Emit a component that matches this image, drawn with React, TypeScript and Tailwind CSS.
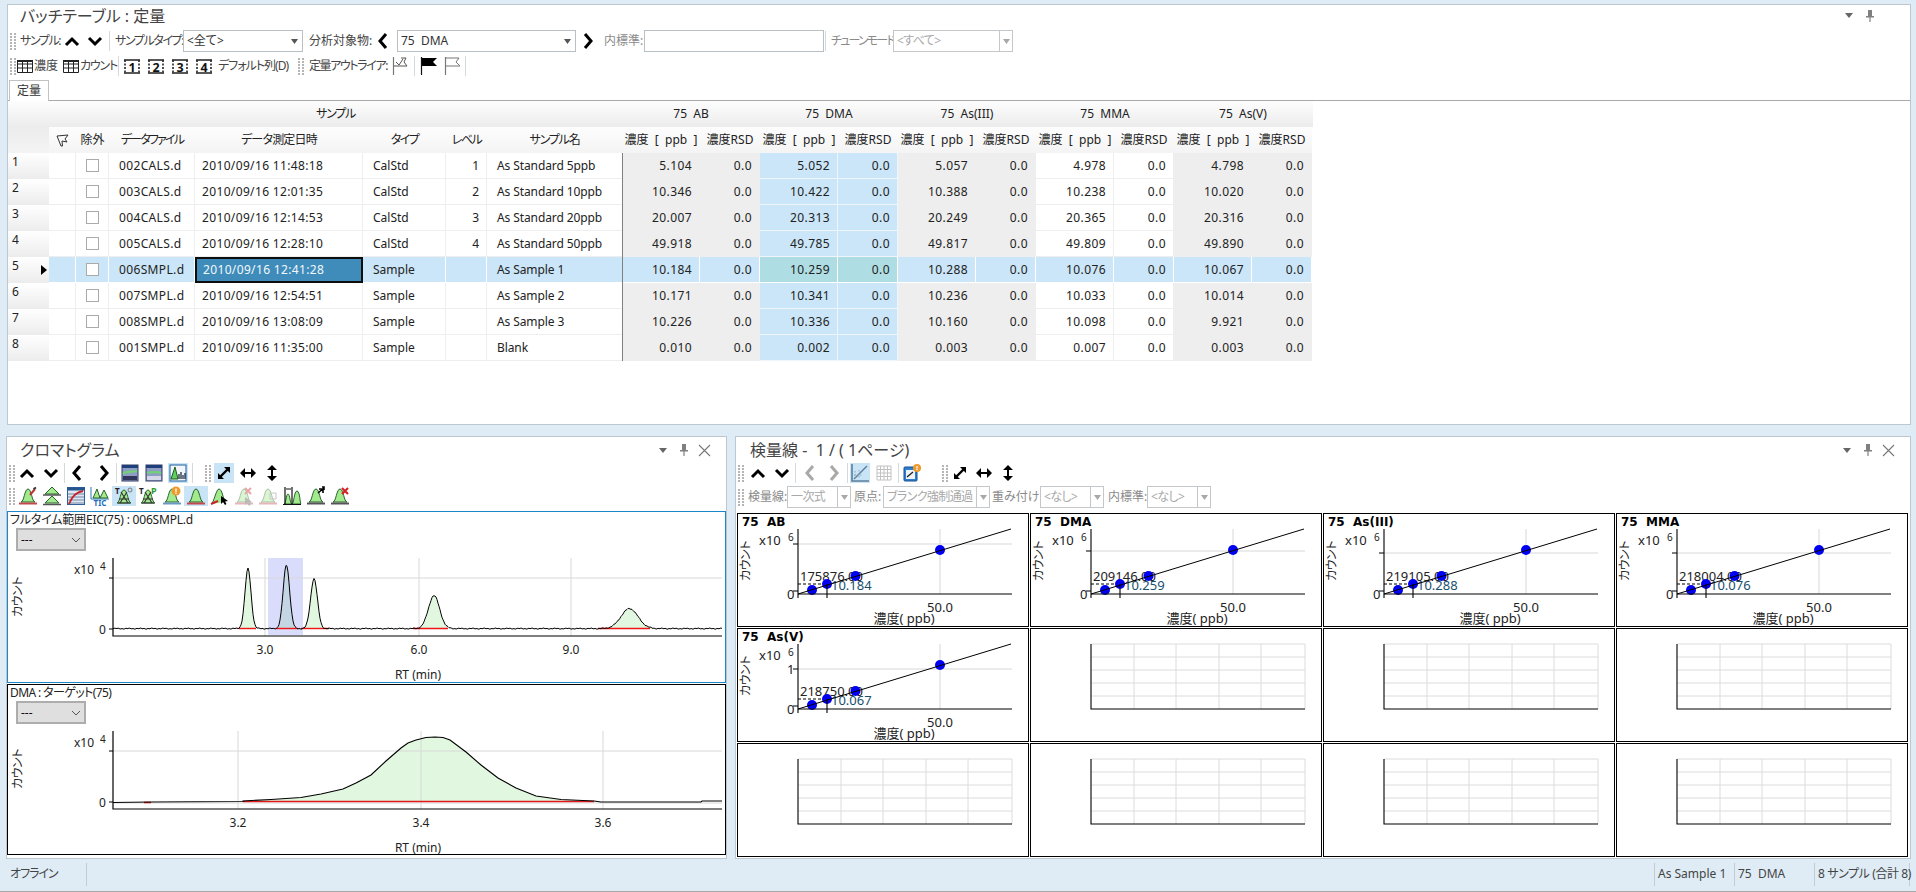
import type { ReactNode } from 'react'

const FONT = '"Noto Sans","Noto Sans CJK JP",sans-serif'

const rows = [
  ['002CALS.d', '2010/09/16 11:48:18', 'CalStd', '1', 'As Standard 5ppb', '5.104', '5.052', '5.057', '4.978', '4.798'],
  ['003CALS.d', '2010/09/16 12:01:35', 'CalStd', '2', 'As Standard 10ppb', '10.346', '10.422', '10.388', '10.238', '10.020'],
  ['004CALS.d', '2010/09/16 12:14:53', 'CalStd', '3', 'As Standard 20ppb', '20.007', '20.313', '20.249', '20.365', '20.316'],
  ['005CALS.d', '2010/09/16 12:28:10', 'CalStd', '4', 'As Standard 50ppb', '49.918', '49.785', '49.817', '49.809', '49.890'],
  ['006SMPL.d', '2010/09/16 12:41:28', 'Sample', '', 'As Sample 1', '10.184', '10.259', '10.288', '10.076', '10.067'],
  ['007SMPL.d', '2010/09/16 12:54:51', 'Sample', '', 'As Sample 2', '10.171', '10.341', '10.236', '10.033', '10.014'],
  ['008SMPL.d', '2010/09/16 13:08:09', 'Sample', '', 'As Sample 3', '10.226', '10.336', '10.160', '10.098', '9.921'],
  ['001SMPL.d', '2010/09/16 11:35:00', 'Sample', '', 'Blank', '0.010', '0.002', '0.003', '0.007', '0.003'],
]

const analytes = ['75  AB', '75  DMA', '75  As(III)', '75  MMA', '75  As(V)']

const calCells = [
  { name: '75  AB', gridY: 31, area: '175876.00', conc: '10.184' },
  { name: '75  DMA', gridY: 38, area: '209146.00', conc: '10.259' },
  { name: '75  As(III)', gridY: 40, area: '219105.00', conc: '10.288' },
  { name: '75  MMA', gridY: 40, area: '218004.00', conc: '10.076' },
  { name: '75  As(V)', gridY: 41, area: '218750.00', conc: '10.067', one: true },
]

const peaks = [
  { c: 247, h: 60, s: 3 },
  { c: 285.4, h: 64, s: 3.2 },
  { c: 313, h: 50, s: 3.4 },
  { c: 433, h: 33, s: 5.6 },
  { c: 628.5, h: 20, s: 8.5 },
]
const fills = [[238, 255], [275, 297], [300, 328], [412, 447], [597, 649]]

function eicY(x: number, noisy = true) {
  let y = 628.6
  for (const p of peaks) y -= p.h * Math.exp(-((x - p.c) ** 2) / (2 * p.s * p.s))
  if (noisy) y += Math.sin(x * 1.7) * 0.35 + Math.sin(x * 0.53) * 0.3
  return y
}

function eicPath() {
  let d = 'M112 628.6'
  for (let x = 113; x <= 721; x++) d += ` L${x} ${eicY(x).toFixed(1)}`
  return d
}

function eicFill(x0: number, x1: number) {
  let d = `M${x0} 628`
  for (let x = x0; x <= x1; x++) d += ` L${x} ${eicY(x, false).toFixed(1)}`
  return d + ` L${x1} 628 Z`
}

const dmaPts = '242,801 270,799.5 300,797.5 320,794 342,789 355,783 370,775 385,761 400,748 407,743 415,740 425,737.5 434,737 442,737.5 449,740 465,752 480,765 497,778 515,788 535,796 560,799.5 593,801'

function Grip() {
  return (
    <svg width="6" height="18" viewBox="0 0 6 18" className="shrink-0">
      {[1, 4, 7, 10, 13, 16].map((y) => (
        <g key={y} fill="#b5b5b5">
          <rect x="0" y={y} width="2" height="2" />
          <rect x="4" y={y} width="2" height="2" />
        </g>
      ))}
    </svg>
  )
}

function Sep({ className = '' }: { className?: string }) {
  return <div className={`w-px h-[20px] shrink-0 bg-[#d3dade] ${className}`} />
}

function Chev({ dir, gray = false }: { dir: 'up' | 'down' | 'left' | 'right'; gray?: boolean }) {
  const d = {
    up: 'M3 13L9 7L15 13',
    down: 'M3 6L9 12L15 6',
    left: 'M12 2L6 9L12 16',
    right: 'M6 2L12 9L6 16',
  }[dir]
  return (
    <svg width="18" height="18" viewBox="0 0 18 18" className="shrink-0">
      <path d={d} fill="none" stroke={gray ? '#a8a8a8' : '#000'} strokeWidth="3" />
    </svg>
  )
}

function Arrow({ kind }: { kind: 'diag' | 'h' | 'v' }) {
  return (
    <svg width="18" height="18" viewBox="0 0 18 18" className="shrink-0">
      {kind === 'diag' && (
        <g>
          <path d="M5 13L13 5" stroke="#000" strokeWidth="2.4" />
          <path d="M9 3H15V9Z M3 9V15H9Z" fill="#000" />
        </g>
      )}
      {kind === 'h' && (
        <g>
          <path d="M4 9H14" stroke="#000" strokeWidth="2" />
          <path d="M6 4V14L1 9Z M12 4V14L17 9Z" fill="#000" />
        </g>
      )}
      {kind === 'v' && (
        <g>
          <path d="M9 4V14" stroke="#000" strokeWidth="2" />
          <path d="M4 6H14L9 1Z M4 12H14L9 17Z" fill="#000" />
        </g>
      )}
    </svg>
  )
}

function Caption({ children, w, gray = false }: { children: ReactNode; w: string; gray?: boolean }) {
  return (
    <span className={`${w} shrink-0 whitespace-nowrap text-[12px] leading-none ${gray ? 'text-[#8a8a8a]' : 'text-[#444]'}`}>
      {children}
    </span>
  )
}

function Select({ text, w, className = '' }: { text: string; w: string; className?: string }) {
  return (
    <div className={`${w} ${className} h-[22px] shrink-0 flex items-center justify-between border border-[#b9c0c4] bg-white pl-[3px] pr-[4px] text-[12px] text-[#333] whitespace-pre`}>
      {text}
      <svg width="7" height="5" viewBox="0 0 7 5"><path d="M0 0H7L3.5 5Z" fill="#555" /></svg>
    </div>
  )
}

function DisabledCombo({ text, w, className = '' }: { text: string; w: string; className?: string }) {
  return (
    <div className={`${w} ${className} h-[22px] shrink-0 flex items-center border border-[#c4c8cb] bg-white text-[12px] text-[#a8a8a8]`}>
      <span className="flex-1 pl-[3px] whitespace-nowrap overflow-hidden tracking-[-0.6px]">{text}</span>
      <span className="w-[13px] h-full shrink-0 flex items-center justify-center border-l border-[#c4c8cb]">
        <svg width="7" height="5" viewBox="0 0 7 5"><path d="M0 0H7L3.5 5Z" fill="#a8a8a8" /></svg>
      </span>
    </div>
  )
}

function TableIcon() {
  return (
    <svg width="16" height="14" viewBox="0 0 16 14" className="shrink-0">
      <path d="M0.5 1.5H15.5V13.5H0.5Z M0.5 5H15.5 M0.5 9H15.5 M5.5 1.5V13.5 M10.5 1.5V13.5" fill="none" stroke="#222" />
      <rect x="0" y="1" width="16" height="2" fill="#222" />
    </svg>
  )
}

function NumIcon({ n }: { n: number }) {
  return (
    <svg width="16" height="15" viewBox="0 0 16 15" className="shrink-0">
      <path d="M0 1H16 M0 14H16" stroke="#222" strokeWidth="1.4" />
      <path d="M1 1V14 M15 1V14" stroke="#222" strokeWidth="1.6" strokeDasharray="2 1.5" />
      <text x="8" y="12.5" textAnchor="middle" fontSize="12.5" fontWeight="700" fill="#111">{n}</text>
    </svg>
  )
}

function Flag({ kind }: { kind: 'check' | 'solid' | 'line' }) {
  return (
    <svg width="18" height="20" viewBox="0 0 18 20" className="shrink-0">
      <path d="M1.5 1V19" stroke={kind === 'solid' ? '#111' : '#777'} strokeWidth="1.2" />
      {kind === 'solid' && <path d="M2 2H17L13 6L17 10H2Z" fill="#000" />}
      {kind === 'line' && <path d="M2 2H15L12 6L16 10H2" fill="none" stroke="#777" />}
      {kind === 'check' && <path d="M2 10H15L12 6L14 2H9 M4 6L7 9L11 3" fill="none" stroke="#555" />}
    </svg>
  )
}

function PeakShape({ fade = false, base = '#c24a4a' }: { fade?: boolean; base?: string }) {
  return (
    <g opacity={fade ? 0.35 : 1}>
      <path d="M3 16C6 16 6.5 3 10 3C13.5 3 14 16 17 16Z" fill="#a3ea8f" stroke="#27632a" />
      <path d="M1 17.5H19" stroke={base} strokeWidth="2" />
    </g>
  )
}

function ChromIcon({ id }: { id: number }) {
  return (
    <svg width="20" height="20" viewBox="0 0 20 20">
      {id === 0 && (
        <g>
          <PeakShape />
          <path d="M12 9L17 3" stroke="#b33" strokeWidth="2" />
          <path d="M15.5 3L18 1.5" stroke="#333" strokeWidth="2" />
        </g>
      )}
      {id === 1 && (
        <g>
          <path d="M10 1L17 8H3Z M10 10L17 17H3Z" fill="#a3ea8f" stroke="#27632a" />
          <path d="M1 9H19 M1 18.5H19" stroke="#555" strokeWidth="1.4" />
        </g>
      )}
      {id === 2 && (
        <g>
          <rect x="1.5" y="1.5" width="17" height="17" fill="#dfe7f1" stroke="#2f5f9c" />
          <rect x="1.5" y="1.5" width="17" height="3" fill="#25558f" />
          <path d="M2 8H18 M2 11H18 M2 14H18 M2 17H18" stroke="#7089a8" />
          <path d="M3 18C6 10 10 6 17 5" fill="none" stroke="#c8222a" strokeWidth="1.8" />
        </g>
      )}
      {id === 3 && (
        <g>
          <path d="M1 1V13H19" fill="none" stroke="#2478c4" />
          <path d="M3 12L7 3L10 12L14 4L18 12Z" fill="#a3ea8f" stroke="#27632a" />
          <text x="10" y="20" textAnchor="middle" fontSize="8" fontWeight="700" fill="#1f6fc0">TIC</text>
        </g>
      )}
      {(id === 4 || id === 5) && (
        <g>
          <path d="M3 17C6 17 6.5 4 10 4C13.5 4 14 17 17 17Z" fill="#a3ea8f" stroke="#27632a" />
          <path d="M6 17L13 6 M14 17L7 6 M4 17H16 M5 13H15" stroke="#333" strokeWidth="1.1" />
          <text x="1" y="8" fontSize="8" fontWeight="700" fill="#222">T</text>
          {id === 4 ? (
            <circle cx="16" cy="4" r="2" fill="none" stroke="#777" />
          ) : (
            <text x="13" y="8" fontSize="9" fontWeight="700" fill="#2c9a2c">P</text>
          )}
        </g>
      )}
      {id === 6 && (
        <g>
          <PeakShape base="#6b9ac4" />
          <circle cx="14" cy="5" r="4.5" fill="#ee9a2c" />
          <rect x="13.3" y="2.5" width="1.4" height="3.4" fill="#fff" />
          <rect x="13.3" y="6.6" width="1.4" height="1.3" fill="#fff" />
        </g>
      )}
      {id === 7 && <PeakShape />}
      {id === 8 && (
        <g>
          <path d="M1 18C4 17 6 3 9 3C12 3 13 12 15 16" fill="#a3ea8f" stroke="#27632a" />
          <path d="M1 18L8 15" stroke="#c8222a" strokeWidth="2" />
          <path d="M11 10L11 18L13 16L15 19L16.5 18L15 15.5L18 15Z" fill="#000" />
        </g>
      )}
      {id === 9 && (
        <g opacity="0.4">
          <PeakShape />
          <path d="M11 2L17 8 M17 2L11 8" stroke="#c8222a" strokeWidth="2" />
          <path d="M11 11V19L13 17L15 20L17 18L15 16L18 16Z" fill="#555" />
        </g>
      )}
      {id === 10 && (
        <g opacity="0.4">
          <PeakShape />
          <path d="M12 7H18V13H12Z" fill="none" stroke="#777" />
        </g>
      )}
      {id === 11 && (
        <g>
          <path d="M2 18C4 18 4 8 6 8C8 8 8 18 10 18C12 18 12 5 15 5C18 5 18 18 19 18Z" fill="#a3ea8f" stroke="#27632a" />
          <path d="M3 1V18 M10 1V18 M1 18.5H19 M4 3H9" stroke="#111" strokeWidth="1.2" />
        </g>
      )}
      {id === 12 && (
        <g>
          <PeakShape base="#555" />
          <path d="M12 7L18 2 M16 1L18 1L18 4 M13 3H17V7" fill="none" stroke="#000" strokeWidth="1.6" />
        </g>
      )}
      {id === 13 && (
        <g>
          <PeakShape base="#555" />
          <path d="M12 2L18 8 M18 2L12 8" stroke="#d8222a" strokeWidth="2.2" />
        </g>
      )}
    </svg>
  )
}

function CalIcon({ gray = false }: { gray?: boolean }) {
  return (
    <svg width="20" height="20" viewBox="0 0 20 20">
      <path d="M2 1V18H19" fill="none" stroke={gray ? '#999' : '#5b7f9a'} strokeWidth="1.6" />
      <path d="M4 16L17 3" stroke="#5b7f9a" strokeWidth="1.4" />
      <path d="M5 8V15 M9 7V15 M4 12H12" stroke="#8aa6ba" strokeDasharray="1.5 1.5" />
    </svg>
  )
}

function PanelButtons({ close = true }: { close?: boolean }) {
  return (
    <div className="flex items-center">
      <svg width="8" height="5" viewBox="0 0 8 5" className="mr-[12px]"><path d="M0 0H8L4 5Z" fill="#666" /></svg>
      <svg width="10" height="12" viewBox="0 0 10 12" className="mr-[9px]">
        <path d="M3 0H7V6H9V7.5H5.6V12H4.4V7.5H1V6H3Z" fill="#808080" />
      </svg>
      {close ? (
        <svg width="13" height="13" viewBox="0 0 13 13"><path d="M1 1L12 12M12 1L1 12" stroke="#777" strokeWidth="1.1" /></svg>
      ) : (
        <div className="w-[13px]" />
      )}
    </div>
  )
}

function Header2({ w, children }: { w: string; children: ReactNode }) {
  return <div className={`${w} shrink-0 h-full flex items-center justify-center whitespace-pre`}>{children}</div>
}

function BatchTable() {
  return (
    <div className="text-[12px] text-[#222] leading-none">
      <div className="flex h-[26px] w-[1305px] bg-gradient-to-b from-[#fdfdfd] to-[#ececec] items-center">
        <div className="w-[41px] shrink-0" />
        <div className="w-[573px] shrink-0 text-center tracking-[-1.2px]">サンプル</div>
        {analytes.map((a) => (
          <div key={a} className="w-[138px] shrink-0 text-center whitespace-pre">{a}</div>
        ))}
      </div>
      <div className="flex h-[26px] w-[1305px]">
        <div className="w-[41px] shrink-0 bg-gradient-to-b from-[#ececec] to-[#f4f4f4]" />
        <div className="flex h-full bg-gradient-to-b from-[#fdfdfd] to-[#f4f4f4]">
          <Header2 w="w-[27px]">
            <svg width="13" height="13" viewBox="0 0 13 13">
              <path d="M1 2L12 1L9 5L11 8L6 7L6.5 12L5 12Z" fill="none" stroke="#333" />
            </svg>
          </Header2>
          <Header2 w="w-[33px]">除外</Header2>
          <Header2 w="w-[86px] tracking-[-1.8px]">データファイル</Header2>
          <Header2 w="w-[168px] tracking-[-0.8px]">データ測定日時</Header2>
          <Header2 w="w-[83px] tracking-[-1.5px]">タイプ</Header2>
          <Header2 w="w-[41px] tracking-[-1.5px]">レベル</Header2>
          <Header2 w="w-[135px] tracking-[-1.2px]">サンプル名</Header2>
          {analytes.map((a) => (
            <div key={a} className="flex h-full">
              <Header2 w="w-[78px]">{'濃度  [  ppb  ]'}</Header2>
              <Header2 w="w-[60px]">濃度RSD</Header2>
            </div>
          ))}
        </div>
      </div>
      {rows.map((r, i) => {
        const sel = i === 4
        const base = sel ? 'bg-[#cbe6f8] border-white' : 'bg-white border-[#eeeeee]'
        return (
          <div key={r[0]} className="flex h-[26px] w-[1305px]">
            <div className="w-[41px] shrink-0 relative pl-[4px] pt-[3px] bg-gradient-to-b from-[#ffffff] to-[#ececec]">
              {i + 1}
              {sel && (
                <svg width="6" height="10" viewBox="0 0 6 10" className="absolute left-[33px] top-[8px]"><path d="M0 0L6 5L0 10Z" fill="#000" /></svg>
              )}
            </div>
            <div className={`w-[27px] shrink-0 border-r border-b ${base}`} />
            <div className={`w-[33px] shrink-0 flex items-center justify-center border-r border-b ${base}`}>
              <div className="w-[13px] h-[13px] bg-white border border-[#aaaaaa]" />
            </div>
            <div className={`w-[86px] shrink-0 flex items-center pl-[10px] tracking-[0.35px] border-r border-b ${base}`}>{r[0]}</div>
            {sel ? (
              <div className="w-[168px] shrink-0 flex items-center pl-[6px] tracking-[0.35px] bg-[#3f8cba] text-[#f2f8fb] border-2 border-[#0d0d0d]">{r[1]}</div>
            ) : (
              <div className={`w-[168px] shrink-0 flex items-center pl-[7px] tracking-[0.35px] border-r border-b ${base}`}>{r[1]}</div>
            )}
            <div className={`w-[83px] shrink-0 flex items-center pl-[10px] border-r border-b ${base}`}>{r[2]}</div>
            <div className={`w-[41px] shrink-0 flex items-center justify-end pr-[7px] border-r border-b ${base}`}>{r[3]}</div>
            <div className={`w-[135px] shrink-0 flex items-center pl-[10px] tracking-[-0.1px] border-b ${base} border-r-0`}>{r[4]}</div>
            {r.slice(5).map((v, c) => {
              let cell = 'bg-[#eeeeee] border-[#eeeeee]'
              if (c === 1) cell = 'bg-[#cbe6f8] border-[#eef6fb]'
              if (c === 3) cell = 'bg-white border-[#eeeeee]'
              if (sel) cell = 'bg-[#cbe6f8] border-white'
              if (sel && c === 1) cell = 'bg-[#aedde3] border-white'
              return (
                <div key={c} className={`flex h-full ${c === 0 ? 'border-l border-[#808080]' : ''}`}>
                  <div className={`${c === 0 ? 'w-[77px]' : 'w-[78px]'} h-full flex items-center justify-end pr-[7px] tracking-[0.4px] border-r border-b ${cell}`}>{v}</div>
                  <div className={`w-[60px] h-full flex items-center justify-end pr-[7px] tracking-[0.4px] border-r border-b ${cell}`}>0.0</div>
                </div>
              )
            })}
          </div>
        )
      })}
    </div>
  )
}

function ComboGray() {
  return (
    <div className="w-[70px] h-[23px] ml-[8px] flex items-center justify-between bg-[#dfdfdf] border-2 border-[#adadad] pl-[3px] pr-[3px] text-[12px] text-[#111]">
      ---
      <svg width="10" height="6" viewBox="0 0 10 6"><path d="M1 1L5 5L9 1" fill="none" stroke="#555" /></svg>
    </div>
  )
}

function EicChart() {
  return (
    <svg width="717" height="131" viewBox="7 551 717 131" className="block" fontSize="12" fill="#222">
      {fills.map(([a, b]) => (
        <path key={a} d={eicFill(a, b)} fill="#e2f7e0" />
      ))}
      <rect x="267" y="558" width="35" height="77" fill="#7882f0" opacity="0.28" />
      <path d="M264 558V636 M418 558V636 M570 558V636 M112 578H721" stroke="#d8d8d8" />
      {fills.map(([a, b]) => (
        <path key={a} d={`M${a} 628.5H${b}`} stroke="#f01414" strokeWidth="1.4" />
      ))}
      <path d={eicPath()} fill="none" stroke="#000" strokeWidth="1" />
      <path d="M112 558V636H721 M108 578H112 M108 629H112" fill="none" stroke="#000" strokeWidth="1.2" />
      <text x="73" y="569" dominantBaseline="central">x10</text>
      <text x="99" y="566" fontSize="10" dominantBaseline="central">4</text>
      <text x="98" y="629" dominantBaseline="central">0</text>
      <text x="264" y="649" textAnchor="middle" dominantBaseline="central">3.0</text>
      <text x="418" y="649" textAnchor="middle" dominantBaseline="central">6.0</text>
      <text x="570" y="649" textAnchor="middle" dominantBaseline="central">9.0</text>
      <text x="417" y="674" textAnchor="middle" dominantBaseline="central">RT (min)</text>
      <text transform="translate(16 597) rotate(-90)" textAnchor="middle" dominantBaseline="central" letterSpacing="-0.5">カウント</text>
    </svg>
  )
}

function DmaChart() {
  return (
    <svg width="717" height="131" viewBox="7 723 717 131" className="block" fontSize="12" fill="#222">
      <polygon points={`${dmaPts} 593,801.5 242,801.5`} fill="#e2f7e0" />
      <path d="M237 731V809 M420 731V809 M602 731V809 M112 751H721 M112 803H721" stroke="#d8d8d8" />
      <path d="M242 801.5H593 M143 802.5H150" stroke="#e01818" strokeWidth="1.3" />
      <polyline points={`112,802.5 150,802 242,801.5 ${dmaPts} 600,802 700,802 701,801 721,801`} fill="none" stroke="#000" strokeWidth="1.1" />
      <path d="M112 731V809H721 M108 751H112 M108 802H112" fill="none" stroke="#000" strokeWidth="1.2" />
      <text x="73" y="742" dominantBaseline="central">x10</text>
      <text x="99" y="739" fontSize="10" dominantBaseline="central">4</text>
      <text x="98" y="802" dominantBaseline="central">0</text>
      <text x="237" y="822" textAnchor="middle" dominantBaseline="central">3.2</text>
      <text x="420" y="822" textAnchor="middle" dominantBaseline="central">3.4</text>
      <text x="602" y="822" textAnchor="middle" dominantBaseline="central">3.6</text>
      <text x="417" y="847" textAnchor="middle" dominantBaseline="central">RT (min)</text>
      <text transform="translate(16 769) rotate(-90)" textAnchor="middle" dominantBaseline="central" letterSpacing="-0.5">カウント</text>
    </svg>
  )
}

function CalCell({ c }: { c: (typeof calCells)[number] }) {
  const pts = [[75, 77], [90, 71], [118.5, 63], [203, 37]]
  return (
    <svg width="290" height="112" viewBox="1 1 290 112" className="block" fontSize="13" fill="#222">
      <path d={`M61 ${c.gridY}H275 M203 16V81`} stroke="#d8d8d8" />
      <text x="5" y="9" fontSize="12" fontFamily="DejaVu Sans" fontWeight="700" fill="#000" dominantBaseline="central" xmlSpace="preserve">{c.name}</text>
      <text x="22" y="27" dominantBaseline="central">x10</text>
      <text x="51" y="24" fontSize="10" dominantBaseline="central">6</text>
      <text x="50" y="81" dominantBaseline="central">0</text>
      {c.one && <text x="50" y="41" dominantBaseline="central">1</text>}
      <text x="63" y="63" dominantBaseline="central">{c.area}</text>
      <text x="94" y="72" fill="#17506e" dominantBaseline="central">{c.conc}</text>
      <path d="M61 71H90" stroke="#000" strokeDasharray="3 2" />
      {pts.map(([x, y]) => (
        <circle key={x} cx={x} cy={y} r="5" fill="#0000f0" />
      ))}
      <path d="M61 81L274 16" stroke="#000" />
      <path d={`M61 16V85 M61 81H275 M90 71V85 M56 ${c.gridY}H61 M56 78H61`} fill="none" stroke="#000" strokeWidth="1.1" />
      <text x="203" y="94" textAnchor="middle" dominantBaseline="central">50.0</text>
      <text x="167" y="105" textAnchor="middle" dominantBaseline="central">濃度( ppb)</text>
      <text transform="translate(8 48) rotate(-90)" fontSize="12" textAnchor="middle" dominantBaseline="central" letterSpacing="-0.5">カウント</text>
    </svg>
  )
}

function EmptyCell() {
  return (
    <svg width="290" height="112" viewBox="1 1 290 112" className="block">
      <path d="M61 16H275V81 M61 29H275 M61 42H275 M61 55H275 M61 68H275 M104 16V81 M146 16V81 M189 16V81 M231 16V81" fill="none" stroke="#dcdcdc" />
      <path d="M61 16V81H275" fill="none" stroke="#000" strokeWidth="1.1" />
    </svg>
  )
}

export default function App() {
  return (
    <div
      className="w-[1916px] h-[892px] flex flex-col overflow-hidden bg-[#dfecf5] pt-[4px] [font-feature-settings:'palt']"
      style={{ fontFamily: FONT }}
    >
      {/* batch table */}
      <div className="ml-[7px] w-[1904px] h-[421px] shrink-0 bg-white border border-[#bcc8d0]">
        <div className="h-[21px] flex items-center justify-between pr-[13px]">
          <span className="ml-[12px] text-[16px] leading-none text-[#444]">バッチテーブル : 定量</span>
          <PanelButtons close={false} />
        </div>
        <div className="h-[24px] mt-[3px] flex items-center">
          <div className="ml-[2px]"><Grip /></div>
          <Caption w="w-[43px] ml-[4px] tracking-[-1.4px]">サンプル:</Caption>
          <div className="ml-[0px]"><Chev dir="up" /></div>
          <div className="ml-[5px]"><Chev dir="down" /></div>
          <Sep className="ml-[5px]" />
          <Caption w="w-[68px] ml-[5px] tracking-[-1.4px]">サンプルタイプ:</Caption>
          <Select text="<全て>" w="w-[120px]" />
          <Caption w="w-[65px] ml-[6px]">分析対象物:</Caption>
          <Chev dir="left" />
          <Select text="75  DMA" w="w-[179px]" className="ml-[5px]" />
          <div className="ml-[3px]"><Chev dir="right" /></div>
          <Caption gray w="w-[40px] ml-[7px]">内標準:</Caption>
          <div className="w-[180px] h-[22px] shrink-0 border border-[#b9c0c4] bg-white" />
          <Sep className="ml-[1px]" />
          <Caption gray w="w-[62px] ml-[5px] tracking-[-1.8px]">チューンモード:</Caption>
          <DisabledCombo text="<すべて>" w="w-[120px]" />
        </div>
        <div className="h-[24px] mt-[1px] flex items-center">
          <div className="ml-[2px]"><Grip /></div>
          <div className="ml-[1px]"><TableIcon /></div>
          <Caption w="w-[29px] ml-[1px]">濃度</Caption>
          <TableIcon />
          <Caption w="w-[38px] ml-[1px] tracking-[-1.2px]">カウント</Caption>
          <Sep />
          <div className="ml-[5px]"><NumIcon n={1} /></div>
          <div className="ml-[8px]"><NumIcon n={2} /></div>
          <div className="ml-[8px]"><NumIcon n={3} /></div>
          <div className="ml-[8px]"><NumIcon n={4} /></div>
          <Caption w="w-[80px] ml-[6px] tracking-[-1px]">デフォルト列(D)</Caption>
          <Grip />
          <Caption w="w-[83px] ml-[5px] tracking-[-1.4px]">定量アウトライア:</Caption>
          <Flag kind="check" />
          <Sep className="ml-[4px]" />
          <div className="ml-[5px]"><Flag kind="solid" /></div>
          <div className="ml-[6px]"><Flag kind="line" /></div>
          <Sep className="ml-[3px]" />
        </div>
        <div className="h-[22px] mt-[1px] flex items-end border-b border-[#a9a9a9]">
          <div className="ml-[1px] w-[40px] h-[21px] -mb-px bg-white border border-b-0 border-[#c2c2c2] flex items-center justify-center text-[12px] text-[#333]">定量</div>
        </div>
        <BatchTable />
      </div>

      <div className="mt-[11px] h-[423px] shrink-0 flex">
        {/* chromatogram */}
        <div className="ml-[6px] w-[721px] h-full bg-white border border-[#bcc8d0]">
          <div className="h-[26px] flex items-center justify-between pr-[15px]">
            <span className="ml-[13px] text-[16px] leading-none text-[#444]">クロマトグラム</span>
            <PanelButtons />
          </div>
          <div className="h-[20px] flex items-center">
            <div className="ml-[2px]"><Grip /></div>
            <div className="w-[24px] flex justify-center"><Chev dir="up" /></div>
            <div className="w-[24px] flex justify-center"><Chev dir="down" /></div>
            <Sep className="ml-[1px]" />
            <div className="w-[24px] flex justify-center"><Chev dir="left" /></div>
            <div className="w-[24px] flex justify-center ml-[3px]"><Chev dir="right" /></div>
            <Sep />
            <div className="w-[24px] ml-[1px] flex justify-center">
              <svg width="18" height="18" viewBox="0 0 18 18">
                <rect x="1" y="1" width="16" height="16" fill="#8f9fc4" stroke="#333a66" />
                <rect x="1" y="1" width="16" height="3" fill="#1f3f7a" />
                <path d="M2 10C5 6 9 9 16 7" fill="none" stroke="#6fd56f" strokeWidth="2" />
                <rect x="2" y="12" width="14" height="4" fill="#30365c" />
              </svg>
            </div>
            <div className="w-[24px] flex justify-center">
              <svg width="18" height="18" viewBox="0 0 18 18">
                <rect x="1" y="1" width="16" height="16" fill="#8f9fc4" stroke="#333a66" />
                <rect x="1" y="1" width="16" height="3" fill="#1f3f7a" />
                <path d="M2 8C5 10 9 6 16 9" fill="none" stroke="#6fd56f" strokeWidth="2" />
                <rect x="2" y="12" width="14" height="4" fill="#d5d8e8" />
              </svg>
            </div>
            <div className="w-[20px] ml-[2px] h-[20px] flex items-center justify-center bg-[#c9e4f6]">
              <svg width="18" height="18" viewBox="0 0 18 18">
                <rect x="1" y="1" width="16" height="16" fill="#f2f6fa" stroke="#1f5f9a" />
                <path d="M2 15L6 3L9 15Z" fill="#5fcf5f" stroke="#1c5c1c" />
                <path d="M10 15V10 M12 15V8 M14 15V11 M16 15V9" stroke="#123" strokeWidth="1.2" />
              </svg>
            </div>
            <Sep className="ml-[4px]" />
            <div className="ml-[12px]"><Grip /></div>
            <div className="w-[20px] ml-[3px] h-[20px] flex items-center justify-center bg-[#c9e4f6]"><Arrow kind="diag" /></div>
            <div className="w-[24px] ml-[2px] flex justify-center"><Arrow kind="h" /></div>
            <div className="w-[24px] flex justify-center"><Arrow kind="v" /></div>
          </div>
          <div className="h-[20px] mt-[3px] flex items-center">
            <div className="ml-[2px]"><Grip /></div>
            <div className="ml-[1px] flex">
              {[0, 1, 2, 3, 4, 5, 6, 7, 8, 9, 10, 11, 12, 13].map((id) => (
                <div key={id} className={`w-[24px] h-[20px] flex justify-center ${id === 4 || id === 7 ? 'bg-[#c9e4f6]' : ''}`}>
                  <ChromIcon id={id} />
                </div>
              ))}
            </div>
          </div>
          <div className="mt-[5px] w-[719px] h-[172px] border border-[#1c86c8] overflow-hidden">
            <div className="h-[16px] pl-[2px] text-[12px] leading-[16px] tracking-[-0.2px] text-[#222] whitespace-nowrap">フルタイム範囲EIC(75) : 006SMPL.d</div>
            <ComboGray />
            <EicChart />
          </div>
          <div className="mt-[1px] w-[719px] h-[171px] border border-black overflow-hidden">
            <div className="h-[16px] pl-[2px] text-[12px] leading-[16px] tracking-[-0.6px] text-[#222] whitespace-nowrap">DMA : ターゲット(75)</div>
            <ComboGray />
            <div className="-mt-[1px]"><DmaChart /></div>
          </div>
        </div>

        {/* calibration curves */}
        <div className="ml-[8px] w-[1176px] h-full bg-white border border-[#bcc8d0]">
          <div className="h-[26px] flex items-center justify-between pr-[15px]">
            <span className="ml-[14px] text-[16px] leading-none text-[#444] whitespace-pre">検量線 -  1 / ( 1ページ)</span>
            <PanelButtons />
          </div>
          <div className="h-[20px] flex items-center">
            <div className="ml-[2px]"><Grip /></div>
            <div className="w-[24px] ml-[2px] flex justify-center"><Chev dir="up" /></div>
            <div className="w-[24px] flex justify-center"><Chev dir="down" /></div>
            <Sep className="ml-[1px]" />
            <div className="w-[24px] ml-[2px] flex justify-center"><Chev dir="left" gray /></div>
            <div className="w-[24px] flex justify-center"><Chev dir="right" gray /></div>
            <Sep className="ml-[1px]" />
            <div className="w-[20px] ml-[2px] h-[20px] flex items-center justify-center bg-[#c9e4f6]"><CalIcon /></div>
            <div className="w-[24px] ml-[2px] flex justify-center">
              <svg width="16" height="16" viewBox="0 0 16 16">
                <path d="M1 1H15V15H1Z M1 4.5H15 M1 8H15 M1 11.5H15 M4.5 1V15 M8 1V15 M11.5 1V15" fill="none" stroke="#c2c2c2" />
              </svg>
            </div>
            <Sep className="ml-[2px]" />
            <div className="w-[24px] ml-[1px] flex justify-center">
              <svg width="20" height="20" viewBox="0 0 20 20">
                <rect x="2" y="4" width="13" height="14" rx="1" fill="#2f7fd0" stroke="#17508f" />
                <rect x="4" y="7" width="9" height="9" fill="#eef3f8" />
                <path d="M5 14L11 9" stroke="#222" strokeWidth="1.4" />
                <circle cx="15" cy="5" r="4" fill="#ee9a2c" />
                <rect x="14.4" y="3" width="1.2" height="2.6" fill="#fff" />
                <rect x="14.4" y="6" width="1.2" height="1.2" fill="#fff" />
              </svg>
            </div>
            <div className="ml-[18px]"><Grip /></div>
            <div className="w-[24px] flex justify-center"><Arrow kind="diag" /></div>
            <div className="w-[24px] flex justify-center"><Arrow kind="h" /></div>
            <div className="w-[24px] flex justify-center"><Arrow kind="v" /></div>
          </div>
          <div className="h-[22px] mt-[3px] flex items-center">
            <div className="ml-[2px]"><Grip /></div>
            <Caption gray w="w-[39px] ml-[4px]">検量線:</Caption>
            <DisabledCombo text="一次式" w="w-[64px]" />
            <Caption gray w="w-[29px] ml-[3px]">原点:</Caption>
            <DisabledCombo text="ブランク強制通過" w="w-[107px]" />
            <Caption gray w="w-[48px] ml-[2px]">重み付け:</Caption>
            <DisabledCombo text="<なし>" w="w-[64px]" />
            <Caption gray w="w-[39px] ml-[4px]">内標準:</Caption>
            <DisabledCombo text="<なし>" w="w-[64px]" />
          </div>
          <div className="mt-[5px] ml-[1px] w-[1171px] grid grid-cols-4 grid-rows-3 gap-px">
            {Array.from({ length: 12 }).map((_, i) => (
              <div key={i} className="h-[114px] border border-black overflow-hidden">
                {calCells[i] ? <CalCell c={calCells[i]} /> : <EmptyCell />}
              </div>
            ))}
          </div>
        </div>
      </div>

      {/* status bar */}
      <div className="h-[33px] shrink-0 flex items-center pb-[2px] border-b border-[#a8a8a8] text-[12px] text-[#444]">
        <div className="w-[86px] pl-[10px] tracking-[-1px]">オフライン</div>
        <div className="w-px h-[23px] bg-[#c3ccd2]" />
        <div className="flex-1" />
        <div className="w-[80px] h-[23px] flex items-center pl-[3px] border-l border-[#c3ccd2]">As Sample 1</div>
        <div className="w-[80px] h-[23px] flex items-center pl-[3px] border-l border-[#c3ccd2] whitespace-pre">75  DMA</div>
        <div className="w-[96px] h-[23px] flex items-center pl-[3px] border-x border-[#c3ccd2] whitespace-nowrap tracking-[-0.4px]">8 サンプル (合計 8)</div>
        <div className="w-[6px]" />
      </div>
    </div>
  )
}
